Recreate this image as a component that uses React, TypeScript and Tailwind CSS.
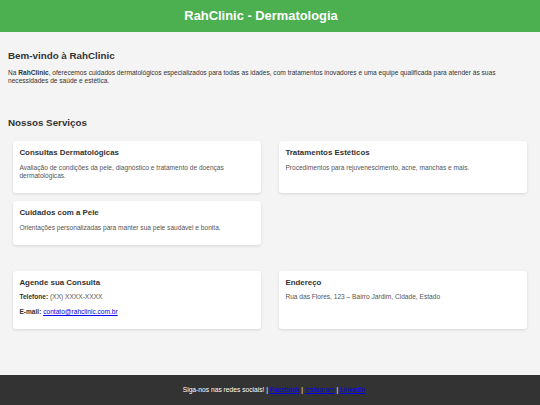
import React from 'react';

type Service = { title: string; text: string };

const services: Service[] = [
  {
    title: 'Consultas Dermatológicas',
    text: 'Avaliação de condições da pele, diagnóstico e tratamento de doenças dermatológicas.',
  },
  {
    title: 'Tratamentos Estéticos',
    text: 'Procedimentos para rejuvenescimento, acne, manchas e mais.',
  },
  {
    title: 'Cuidados com a Pele',
    text: 'Orientações personalizadas para manter sua pele saudável e bonita.',
  },
];

const Card: React.FC<{ title: string; children: React.ReactNode }> = ({ title, children }) => (
  <div className="bg-white rounded-[3px] shadow-[0_1px_3px_rgba(0,0,0,0.12)] px-[6.4px] pt-[7px] pb-[13px]">
    <h3 className="text-[7.9px] leading-[9px] font-bold text-[#333]">{title}</h3>
    <div className="mt-[6.5px] flex flex-col gap-[6.4px] text-[6.6px] leading-[8.3px] text-[#555]">
      {children}
    </div>
  </div>
);

export default function App() {
  return (
    <div
      className="min-h-screen flex flex-col bg-[#f4f4f4] text-[#333]"
      style={{ fontFamily: '"Liberation Sans", Arial, sans-serif' }}
    >
      <header className="h-[32px] flex items-center justify-center bg-[#4CAF50] pr-[18px]">
        <h1 className="text-[12.9px] font-bold text-white">RahClinic - Dermatologia</h1>
      </header>

      <main className="px-[8px]">
        <section>
          <h2 className="mt-[18px] text-[9.8px] leading-[11px] font-bold">Bem-vindo à RahClinic</h2>
          <p className="mt-[8px] text-[6.6px] leading-[8px] max-w-[510px]">
            Na <strong>RahClinic</strong>, oferecemos cuidados dermatológicos especializados para
            todas as idades, com tratamentos inovadores e uma equipe qualificada para atender às suas
            necessidades de saúde e estética.
          </p>
        </section>

        <section>
          <h2 className="mt-[32px] text-[9.8px] leading-[11px] font-bold">Nossos Serviços</h2>
          <div className="mt-[13px] px-[5px] grid grid-cols-2 gap-x-[18px] gap-y-[8px]">
            {services.map((s) => (
              <Card key={s.title} title={s.title}>
                <p>{s.text}</p>
              </Card>
            ))}
          </div>
        </section>

        <section className="mt-[26px] px-[5px] grid grid-cols-2 gap-x-[18px]">
          <Card title="Agende sua Consulta">
            <p>
              <strong className="text-[#333]">Telefone:</strong> (XX) XXXX-XXXX
            </p>
            <p>
              <strong className="text-[#333]">E-mail:</strong>{' '}
              <a href="#" className="text-[#0000ee] underline">
                contato@rahclinic.com.br
              </a>
            </p>
          </Card>
          <Card title="Endereço">
            <p>Rua das Flores, 123 – Bairro Jardim, Cidade, Estado</p>
          </Card>
        </section>
      </main>

      <footer className="mt-auto h-[30px] flex items-center justify-center bg-[#333] text-white text-[6.7px] pl-[8px]">
        <p>
          Siga-nos nas redes sociais! |{' '}
          <a href="#" className="text-[#0000ee] underline">Facebook</a> |{' '}
          <a href="#" className="text-[#0000ee] underline">Instagram</a> |{' '}
          <a href="#" className="text-[#0000ee] underline">LinkedIn</a>
        </p>
      </footer>
    </div>
  );
}
